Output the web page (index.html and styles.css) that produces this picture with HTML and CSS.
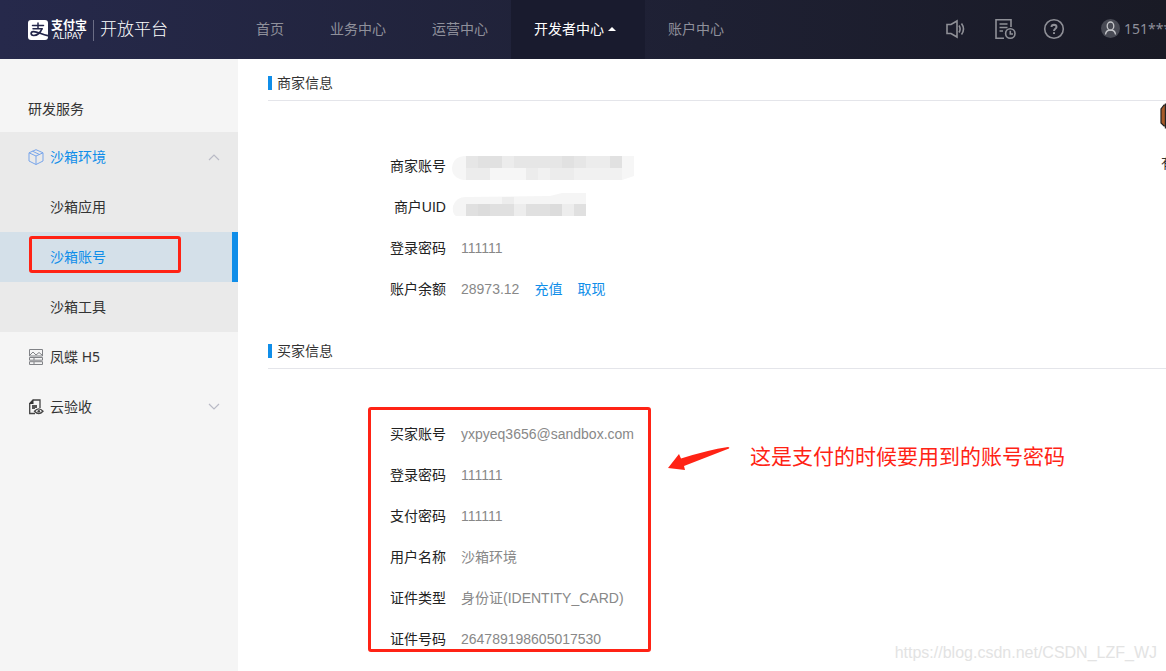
FILE: index.html
```html
<!DOCTYPE html>
<html lang="zh-CN">
<head>
<meta charset="utf-8">
<title>支付宝开放平台</title>
<link rel="stylesheet" href="styles.css">
</head>
<body>
<header class="topbar">
  <a class="brand" href="#">
    <svg class="brand-mark" width="20" height="20" viewBox="0 0 20 20" aria-hidden="true">
      <rect width="20" height="20" rx="3" fill="#fff"/>
      <g fill="none" stroke="#23264a" stroke-linecap="round">
        <path d="M4.5 5.4H15.5M10 3V8.6M5 8.8H14.2" stroke-width="1.5"/>
        <path d="M13.8 9C12.7 12.2 9.4 15.6 5.6 15.5C2.3 15.3 2.4 11.9 5.3 11.6C9.2 11.3 13.2 14.4 19.8 15.7" stroke-width="1.7"/>
      </g>
    </svg>
    <span class="brand-name"><span class="brand-cn">支付宝</span><span class="brand-en">ALIPAY</span></span>
    <span class="brand-product">开放平台</span>
  </a>
  <nav class="nav">
    <a href="#">首页</a>
    <a href="#">业务中心</a>
    <a href="#">运营中心</a>
    <a href="#" class="current">开发者中心<span class="caret"></span></a>
    <a href="#">账户中心</a>
  </nav>
  <div class="tools">
    <button type="button" class="tool" aria-label="公告">
      <svg width="22" height="22" viewBox="0 0 22 22"><path d="M2 6.5V15.5H6L12 19V3L6 6.5ZM14 7.5Q16.2 11 14 14.5M16.5 5.5Q20.5 11 16.5 16.5"/></svg>
    </button>
    <button type="button" class="tool" aria-label="文档">
      <svg width="22" height="22" viewBox="0 0 22 22"><path d="M17 9V1.8H2V20.2H10M5.5 6H13.5M5.5 9.5H13.5M5.5 13H9"/><circle cx="16.3" cy="15.5" r="4.7"/><path d="M16.3 12.8V16H19"/></svg>
    </button>
    <button type="button" class="tool" aria-label="帮助">
      <svg width="22" height="22" viewBox="0 0 22 22"><circle cx="11" cy="11" r="9.3"/><path d="M8.5 9Q8.6 6.7 11 6.7Q13.5 6.8 13.5 8.9C13.5 10.7 11 10.7 11 13M11 14.2V16" stroke-width="2"/></svg>
    </button>
    <a class="user" href="#">
      <svg width="19" height="19" viewBox="0 0 19 19" aria-hidden="true"><circle cx="9.5" cy="9.5" r="9.5" fill="#484a54"/><path d="M4.5 15.5Q5 11 9.5 11Q14 11 14.5 15.5" fill="none" stroke="#c5c6ca" stroke-width="1.3"/><ellipse cx="9.5" cy="7" rx="3.3" ry="4" fill="#484a54" stroke="#c5c6ca" stroke-width="1.3"/></svg>
      <span>151***</span>
    </a>
  </div>
</header>

<div class="layout">
  <aside class="sidebar">
    <h2 class="side-title">研发服务</h2>
    <div class="group open">
      <a class="side-item accent" href="#">
        <svg class="side-icon" width="16" height="16" viewBox="0 0 16 16"><path d="M8 .7L15 3.8V12L8 15.5L1 12V3.8ZM1 3.8L8 7L15 3.8M8 7V15.5M4.5 2.2L11.5 5.5" stroke="#78a5ea"/></svg>
        沙箱环境
        <svg class="arrow" width="12" height="8" viewBox="0 0 12 8"><path d="M1 7L6 2L11 7"/></svg>
      </a>
      <a class="side-item sub" href="#">沙箱应用</a>
      <a class="side-item sub active accent" href="#">沙箱账号</a>
      <a class="side-item sub" href="#">沙箱工具</a>
    </div>
    <a class="side-item" href="#">
      <svg class="side-icon" width="16" height="16" viewBox="0 0 16 16"><path d="M1.5 .5H14.5V7H1.5ZM2 6L5 3L8 6L11 3.5L14 6M1.5 8.5H14.5V11.2H1.5ZM1.5 12.7H14.5V15.5H1.5ZM6 8.5V11M6 13V15.5" stroke="#808286"/></svg>
      凤蝶 H5
    </a>
    <a class="side-item" href="#">
      <svg class="side-icon" width="16" height="16" viewBox="0 0 16 16"><path d="M7 14.5H1.7V4.5L5 1H12V9" stroke="#444" stroke-width="1.3"/><path d="M1 5L5.5 .5V5Z" fill="#333"/><path d="M4 6H9V9H7V10H4Z" fill="#555"/><path d="M6.5 12.2Q10.7 7.5 15 12.2Q10.7 16.8 6.5 12.2Z" fill="#f5f5f5" stroke="#444" stroke-width="1.3"/><circle cx="10.8" cy="12.2" r="1.3" fill="#444"/></svg>
      云验收
      <svg class="arrow" width="12" height="8" viewBox="0 0 12 8"><path d="M1 1L6 6L11 1"/></svg>
    </a>
  </aside>

  <main class="content">
    <section class="panel">
      <h2 class="panel-title">商家信息</h2>
      <dl class="info">
        <div class="row"><dt>商家账号</dt><dd class="masked low">
          <svg width="184" height="24" viewBox="0 0 184 24" role="img" aria-label="已隐藏">
            <path d="M16 0H184V20L172 24H14Q2 22 2 12Q3 0 16 0" fill="#f6f6f6"/>
            <path d="M16 0H172V12H16Z" fill="#e6e6e6"/>
            <path d="M28 0H52V12H28ZM112 0H124V12H112ZM160 0H172V12H160Z" fill="#e1e1e1"/>
            <path d="M52 0H64V12H52ZM136 0H160V12H136ZM16 12H40V24H16ZM76 12H88V24H76ZM100 12H124V24H100Z" fill="#ececec"/>
            <path d="M124 12H172V24H124ZM88 12H100V24H88Z" fill="#f1f1f1"/>
          </svg></dd></div>
        <div class="row"><dt>商户UID</dt><dd class="masked high">
          <svg width="184" height="24" viewBox="0 0 184 24" role="img" aria-label="已隐藏">
            <path d="M16 5L100 4L112 1H136V24H6Q2 22 3 14Q6 5 16 5" fill="#f5f5f5"/>
            <path d="M16 12H64V24H16ZM76 12H112V24H76ZM124 12H136V24H124Z" fill="#e0e0e0"/>
            <path d="M28 12H40V24H28ZM100 12H112V24H100Z" fill="#dcdcdc"/>
            <path d="M64 12H76V24H64ZM112 12H124V24H112ZM52 5H64V12H52Z" fill="#ededed"/>
          </svg></dd></div>
        <div class="row"><dt>登录密码</dt><dd>111111</dd></div>
        <div class="row"><dt>账户余额</dt><dd>28973.12<a href="#">充值</a><a href="#">取现</a></dd></div>
      </dl>
    </section>
    <section class="panel">
      <h2 class="panel-title">买家信息</h2>
      <dl class="info marked">
        <div class="row"><dt>买家账号</dt><dd>yxpyeq3656@sandbox.com</dd></div>
        <div class="row"><dt>登录密码</dt><dd>111111</dd></div>
        <div class="row"><dt>支付密码</dt><dd>111111</dd></div>
        <div class="row"><dt>用户名称</dt><dd>沙箱环境</dd></div>
        <div class="row"><dt>证件类型</dt><dd>身份证(IDENTITY_CARD)</dd></div>
        <div class="row"><dt>证件号码</dt><dd>264789198605017530</dd></div>
      </dl>
      <p class="note">
        <svg width="62" height="26" viewBox="0 0 62 26" aria-hidden="true"><path d="M0 24L11 10L13 14.5Q40 6 60 3Q62 3 61 4.5L16 22L17 26Z" fill="#ff2315"/></svg>
        这是支付的时候要用到的账号密码
      </p>
    </section>
  </main>
</div>

<aside class="helper">
  <svg width="24" height="26" viewBox="0 0 24 26" aria-hidden="true"><path d="M6 2H4L1 6V20L4 23H6Z" fill="#a75a2a" stroke="#222" stroke-width="1.2"/><path d="M5.4 1H20V25H5.4Z" fill="#e9c65c" stroke="#222" stroke-width="1.2"/></svg>
  <span>有</span>
</aside>
<p class="watermark">https://blog.csdn.net/CSDN_LZF_WJ</p>
</body>
</html>
```
FILE: styles.css
```css
*, *::before, *::after { box-sizing: border-box; }
html, body { height: 100%; }
body {
  margin: 0;
  position: relative;
  overflow: hidden;
  display: flex;
  flex-direction: column;
  background: #fff;
  color: #333;
  font: 14px/20px "Liberation Sans", "Noto Sans CJK SC", sans-serif;
}
a { color: inherit; text-decoration: none; }
h2, p, dl, dd { margin: 0; font-weight: 400; }
button { padding: 0; border: 0; background: none; }
svg { display: block; flex: none; }

.topbar {
  flex: none;
  display: flex;
  align-items: center;
  height: 59px;
  padding: 0 0 2px 28px;
  background: linear-gradient(90deg, #26294b, #1e2033 60%, #191a25);
  color: #8f909b;
}
.brand { display: flex; align-items: center; width: 205px; padding-top: 3px; color: #fff; }
.brand-name { display: flex; flex-direction: column; margin-left: 3px; padding-right: 6px; border-right: 1px solid #6b6d85; }
.brand-cn { font-size: 12px; line-height: 12px; font-weight: 700; }
.brand-en { padding-left: 2px; font: 9px/9px "DejaVu Sans", sans-serif; }
.brand-product { margin-left: 6px; font-size: 17px; font-weight: 300; }

.nav { display: flex; align-self: stretch; margin-bottom: -2px; }
.nav a { display: flex; align-items: center; padding: 0 23px 2px; }
.nav .current { background: #191b2e; color: #fff; }
.caret { width: 8px; margin: 0 6px 0 4px; border: 4px solid transparent; border-top: 0; border-bottom-color: #fff; }

.tools { display: flex; align-items: center; gap: 27px; margin-left: auto; }
.tool { color: inherit; }
.tool svg { fill: none; stroke: #8f9097; stroke-width: 1.6; }
.user { display: flex; align-items: center; gap: 4px; width: 74px; padding-left: 9px; overflow: hidden; font: 14px/20px "Noto Sans", sans-serif; }

.layout { flex: 1; display: flex; min-height: 0; }
.sidebar { flex: none; width: 238px; background: #f5f5f5; font-family: "Noto Sans", "Noto Sans CJK SC", sans-serif; }
.side-title { padding: 27px 28px 0; font-size: 14px; line-height: 46px; }
.open { background: #eaeaea; }
.side-item { position: relative; display: flex; align-items: center; height: 50px; padding: 0 18px 0 28px; }
.side-icon { margin-right: 6px; fill: none; }
.sub { padding-left: 50px; }
.accent { color: #108ee9; }
.active { background: #d4e0e9; border-right: 6px solid #108ee9; }
.active::after { content: ""; position: absolute; left: 29px; top: 4px; width: 152px; height: 37px; border: 3px solid #ff2315; border-radius: 3px; }
.arrow { margin-left: auto; fill: none; stroke: #b9bac6; stroke-width: 1.2; }

.content { flex: 1; min-width: 0; padding: 14px 0 0 30px; }
.panel { position: relative; margin-bottom: 32px; }
.panel-title { display: flex; align-items: center; height: 28px; padding-bottom: 8px; border-bottom: 1px solid #e4e5ea; font-size: 14px; line-height: 20px; }
.panel-title::before { content: ""; width: 4px; height: 14px; margin-right: 5px; background: #108ee9; }
.info { position: relative; width: 283px; margin: 44px 0 0 100px; }
.row { display: flex; align-items: center; height: 41px; }
dt { width: 78px; margin-right: 15px; text-align: right; color: #222; }
dd { white-space: nowrap; color: #888; }
dd a { margin-left: 15px; color: #108ee9; }
.masked { margin-left: -11px; }
.low { padding-top: 4px; }
.high { padding-bottom: 6px; }
.marked::after { content: ""; position: absolute; inset: -6px 0 7px; border: 3px solid #ff2315; border-radius: 3px; }
.note { position: absolute; left: 400px; top: 103px; display: flex; gap: 20px; font-size: 21px; line-height: 26px; white-space: nowrap; color: #ff2315; }

.helper { position: absolute; right: -20px; top: 103px; width: 26px; overflow: hidden; }
.helper span { display: block; margin-top: 24px; padding-left: 1px; white-space: nowrap; }
.watermark { position: absolute; right: 9px; bottom: 8px; font-size: 16px; line-height: 20px; color: #e3e3e3; }
```
